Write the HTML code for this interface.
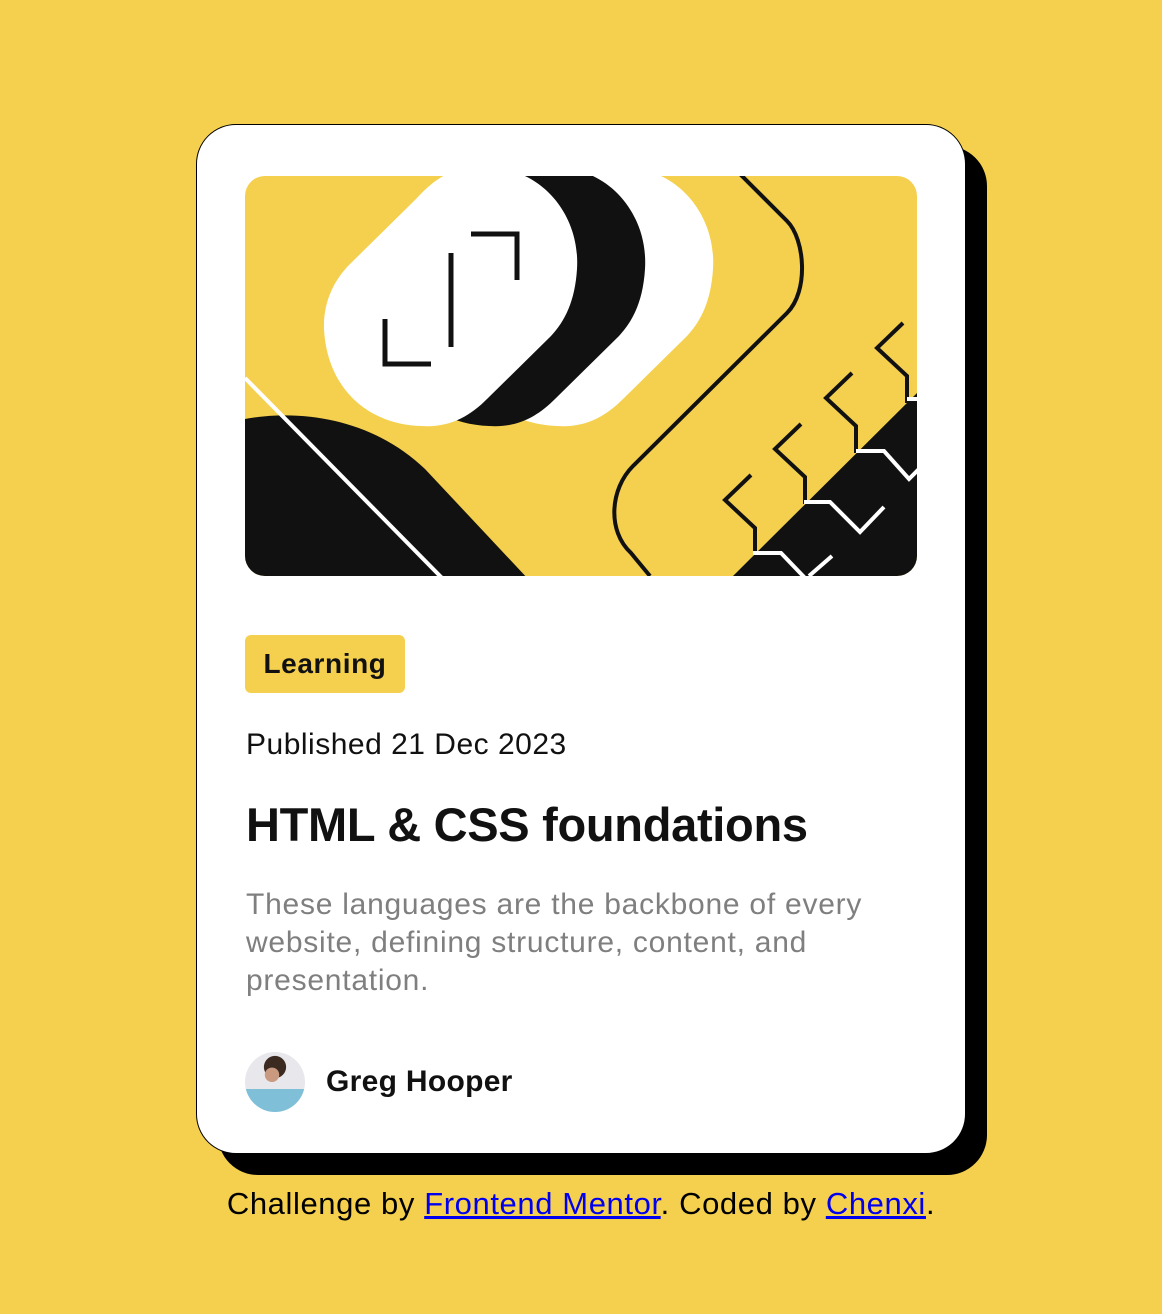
<!DOCTYPE html>
<html><head><meta charset="utf-8"><style>
*{margin:0;padding:0;box-sizing:border-box}
body{width:1162px;height:1314px;background:#f4d04e;position:relative;font-family:"Liberation Sans",sans-serif;overflow:hidden}
.sh{position:absolute;left:218px;top:146px;width:769px;height:1029px;background:#000;border-radius:40px}
.card{position:absolute;left:196px;top:124px;width:770px;height:1030px;background:#fff;border:1.5px solid #000;border-radius:40px}
.abs{position:absolute;white-space:nowrap}
svg{position:absolute;left:245px;top:176px}
.badge{left:245px;top:635px;width:160px;height:58px;background:#f4d04e;border-radius:6px;font-weight:bold;font-size:28px;line-height:58px;text-align:center;color:#111;letter-spacing:0.6px}
.pub{left:246px;top:728px;font-size:30px;color:#111;letter-spacing:0.5px}
.title{left:246px;top:797px;font-size:47px;font-weight:bold;color:#111;letter-spacing:-0.3px}
.p{left:246px;top:886px;font-size:30px;line-height:38px;color:#7f7f7f;white-space:normal;width:660px;letter-spacing:0.75px}
.av{left:245px;top:1052px;width:60px;height:60px;border-radius:50%;background:radial-gradient(circle at 45% 38%,#c99a80 0 14%,transparent 15%),radial-gradient(circle at 50% 25%,#3a2a20 0 20%,transparent 21%),linear-gradient(#e8e8ec 0 62%,#7fc0d8 62%);overflow:hidden}
.name{left:326px;top:1065px;font-size:30px;font-weight:bold;color:#111;letter-spacing:0.3px}
.foot{left:0;width:1162px;top:1186px;text-align:center;font-size:31px;color:#000;letter-spacing:0.6px}
.foot a{color:#0000ee;text-decoration:underline}
</style></head><body>
<div class="sh"></div>
<div class="card"></div>
<svg width="672" height="400" viewBox="0 0 672 400">
<defs><clipPath id="c"><rect width="672" height="400" rx="20"/></clipPath></defs>
<g clip-path="url(#c)">
<rect width="672" height="400" fill="#f4d04e"/>
<path d="M171,23 C185,8 195,0 210,-5 L266,-5 C305,5 335,45 332,93 C330,125 320,145 306,160 L242,223 C225,240 205,252 176,250 C120,248 82,210 79,153 C78,125 90,103 105,88 Z" fill="#fff" transform="translate(136,0)"/>
<path d="M171,23 C185,8 195,0 210,-5 L266,-5 C305,5 335,45 332,93 C330,125 320,145 306,160 L242,223 C225,240 205,252 176,250 C120,248 82,210 79,153 C78,125 90,103 105,88 Z" fill="#111" transform="translate(68,0)"/>
<path d="M171,23 C185,8 195,0 210,-5 L266,-5 C305,5 335,45 332,93 C330,125 320,145 306,160 L242,223 C225,240 205,252 176,250 C120,248 82,210 79,153 C78,125 90,103 105,88 Z" fill="#fff"/>
<g stroke="#111" stroke-width="5" fill="none">
<path d="M226,58 H272 V104"/><path d="M206,77 V171"/><path d="M140,143 V188 H186"/>
</g>
<path d="M0,243 C60,232 130,245 180,293 L285,405 L0,405 Z" fill="#111"/>
<path d="M0,202 L197,402" stroke="#fff" stroke-width="4"/>
<path d="M495,-2 L542,45 C560,63 564,115 542,137 L388,290 C365,313 362,355 386,377 L405,400" stroke="#111" stroke-width="4" fill="none"/>
<path d="M672,217 L486,402 L672,402 Z" fill="#111"/>
<g stroke="#111" stroke-width="4" fill="none">
<path d="M658,147 l-26,25 l30,28 v27"/>
<path d="M607,197 l-26,25 l30,28 v27"/>
<path d="M556,248 l-26,25 l30,28 v27"/>
<path d="M506,299 l-26,25 l30,28 v27"/>
</g>
<g stroke="#fff" stroke-width="4" fill="none">
<path d="M662,223 H674"/>
<path d="M611,275 H639 L664,303 L674,293"/>
<path d="M559,326 H585 L615,356 L639,331"/>
<path d="M508,377 H536 L560,402 M564,400 L587,380"/>
</g>
</g>
</svg>
<div class="abs badge">Learning</div>
<div class="abs pub">Published 21 Dec 2023</div>
<div class="abs title">HTML &amp; CSS foundations</div>
<div class="abs p">These languages are the backbone of every website, defining structure, content, and presentation.</div>
<div class="abs av"></div>
<div class="abs name">Greg Hooper</div>
<div class="abs foot">Challenge by <a>Frontend Mentor</a>. Coded by <a>Chenxi</a>.</div>
</body></html>
